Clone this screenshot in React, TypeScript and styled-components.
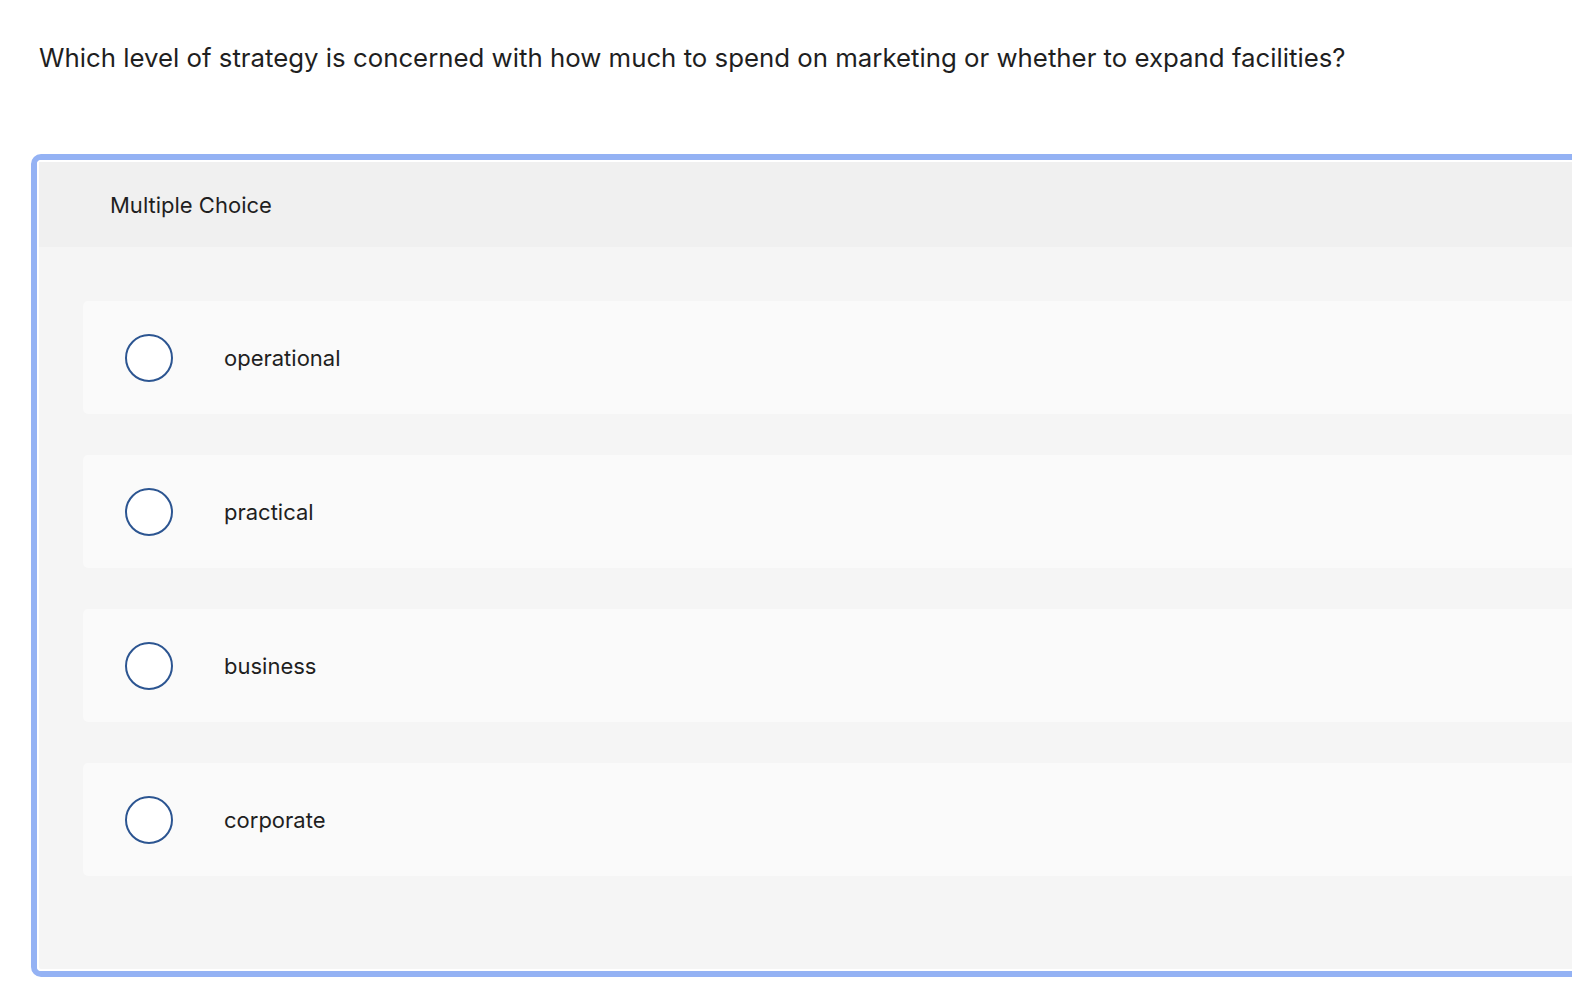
import React from 'react'
import styled, { createGlobalStyle } from 'styled-components'

const GlobalStyle = createGlobalStyle`
  html, body {
    margin: 0;
    padding: 0;
    background: #ffffff;
    overflow: hidden;
  }
  body {
    font-family: 'Inter', 'Lato', sans-serif;
    color: #1f1f1f;
  }
`;

const Page = styled.div`
  width: 1572px;
  height: 1004px;
  padding: 40px 0 0 39px;
  box-sizing: border-box;
`;

const Question = styled.p`
  margin: 0;
  font-size: 25.8px;
  line-height: 36px;
  color: #1f1f1f;
`;

const Card = styled.div`
  margin: 78px 0 0 -8px;
  width: 1700px;
  border: 6px solid #94b2f4;
  border-radius: 10px;
  overflow: hidden;
`;

const Inner = styled.div`
  border: 2px solid #ffffff;
  border-radius: 4px;
  background: #f5f5f5;
`;

const Header = styled.div`
  height: 85px;
  display: flex;
  align-items: center;
  padding-left: 71px;
  background: #f0f0f0;
  font-size: 22px;
  color: #1f1f1f;
`;

const Options = styled.div`
  display: flex;
  flex-direction: column;
  gap: 41px;
  padding: 54px 0 93px 44px;
`;

const Option = styled.label`
  display: flex;
  align-items: center;
  height: 113px;
  padding-left: 42px;
  background: #fafafa;
  border-radius: 5px;
  cursor: pointer;
`;

const Radio = styled.span`
  width: 44px;
  height: 44px;
  border: 2px solid #2c5591;
  border-radius: 50%;
  background: #ffffff;
  flex-shrink: 0;
`;

const OptionText = styled.span`
  margin-left: 51px;
  font-size: 22px;
  color: #1f1f1f;
`;

const choices = ['operational', 'practical', 'business', 'corporate'];

export default function App() {
  return (
    <Page>
      <GlobalStyle />
      <Question>
        Which level of strategy is concerned with how much to spend on marketing or whether to expand facilities?
      </Question>
      <Card>
        <Inner>
          <Header>Multiple Choice</Header>
          <Options>
            {choices.map((c) => (
              <Option key={c}>
                <Radio />
                <OptionText>{c}</OptionText>
              </Option>
            ))}
          </Options>
        </Inner>
      </Card>
    </Page>
  );
}
